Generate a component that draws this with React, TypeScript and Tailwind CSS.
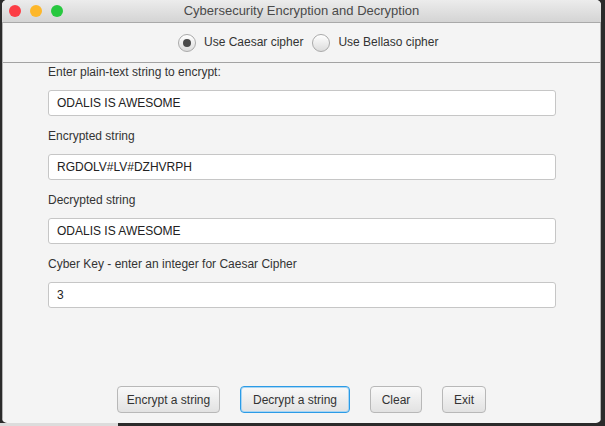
import React from "react";

const font = { fontFamily: '"Liberation Sans", Arial, sans-serif' };

function Radio({ checked, label }: { checked: boolean; label: string }) {
  return (
    <div className="flex items-center gap-[8px]">
      <div className="w-[18px] h-[18px] rounded-full border border-[#a9a9a9] bg-gradient-to-b from-[#ffffff] to-[#dcdcdc] flex items-center justify-center shadow-[inset_0_1px_0_#ffffff]">
        {checked && <div className="w-[8px] h-[8px] rounded-full bg-[#4a4a4a]" />}
      </div>
      <span className="text-[12px] text-[#333333] leading-[17px]">{label}</span>
    </div>
  );
}

function Field({ label, value, first }: { label: string; value: string; first?: boolean }) {
  return (
    <div className={first ? "flex flex-col" : "flex flex-col mt-[11px]"}>
      <div className="h-[18px] leading-[18px] text-[12px] text-[#333333]">{label}</div>
      <div className="mt-[9px] h-[26px] w-[508px] bg-white border border-[#c6c6c6] rounded-[3px] flex items-center pl-[8px] text-[12px] text-[#222222]">
        {value}
      </div>
    </div>
  );
}

function Btn({ label, w, focused }: { label: string; w: string; focused?: boolean }) {
  const base =
    "h-[27px] rounded-[4px] bg-gradient-to-b from-[#f9f9f9] to-[#e2e2e2] flex items-center justify-center text-[12px] text-[#333333] ";
  const border = focused
    ? "border border-[#2b9be6] shadow-[inset_0_0_0_1px_#a8d5f3]"
    : "border border-[#b8b8b8]";
  return <div className={base + border + " " + w}>{label}</div>;
}

export default function App() {
  return (
    <div className="w-[605px] h-[426px] bg-[#2b2b2b] overflow-hidden flex flex-col" style={font}>
      <div className="flex h-[423px]">
        <div className="ml-[2px] w-[599px] h-[423px] flex flex-col rounded-[5px] overflow-hidden bg-[#f4f4f4]">
          {/* Title bar */}
          <div className="relative h-[23px] shrink-0 bg-gradient-to-b from-[#ececec] to-[#d4d4d4] border-b border-[#a9a9a9] flex items-center justify-center">
            <div className="absolute left-[7px] top-[5px] flex gap-[9px]">
              <div className="w-[12px] h-[12px] rounded-full bg-[#fc3d45]" />
              <div className="w-[12px] h-[12px] rounded-full bg-[#fdb72a]" />
              <div className="w-[12px] h-[12px] rounded-full bg-[#27c83f]" />
            </div>
            <span className="text-[13px] text-[#4a4a4a]">Cybersecurity Encryption and Decryption</span>
          </div>
          {/* Body */}
          <div className="flex-1 flex flex-col border-x border-[#b2b2b2]">
            <div className="h-[40px] shrink-0 border-b border-[#a3a3a3] flex items-center pl-[175px] gap-[9px]">
              <Radio checked label="Use Caesar cipher" />
              <Radio checked={false} label="Use Bellaso cipher" />
            </div>
            <div className="flex flex-col pl-[45px]">
              <Field first label="Enter plain-text string to encrypt:" value="ODALIS IS AWESOME" />
              <Field label="Encrypted string" value="RGDOLV#LV#DZHVRPH" />
              <Field label="Decrypted string" value="ODALIS IS AWESOME" />
              <Field label="Cyber Key - enter an integer for Caesar Cipher" value="3" />
            </div>
            <div className="mt-auto pb-[10px] flex justify-center gap-[20px]">
              <Btn label="Encrypt a string" w="w-[103px]" />
              <Btn label="Decrypt a string" w="w-[110px]" focused />
              <Btn label="Clear" w="w-[52px]" />
              <Btn label="Exit" w="w-[44px]" />
            </div>
          </div>
        </div>
      </div>
      <div className="flex h-[3px]">
        <div className="w-[118px] bg-[#dcdcdc]" />
        <div className="flex-1 bg-[#2b2b2b]" />
      </div>
    </div>
  );
}
